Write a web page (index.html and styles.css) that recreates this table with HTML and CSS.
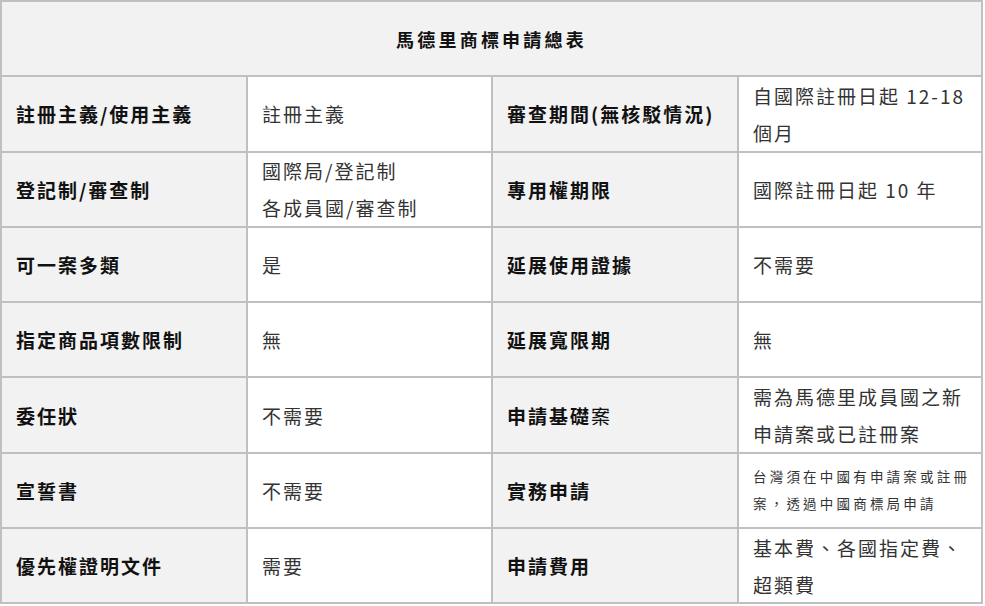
FILE: index.html
```html
<!DOCTYPE html>
<html lang="zh-Hant">
<head>
<meta charset="utf-8">
<title>馬德里商標申請總表</title>
<link rel="stylesheet" href="styles.css">
</head>
<body>
<div class="table">
  <div class="head">馬德里商標申請總表</div>

  <div class="cell label">註冊主義/使用主義</div>
  <div class="cell value">註冊主義</div>
  <div class="cell label">審查期間(無核駁情況)</div>
  <div class="cell value">自國際註冊日起 12-18 個月</div>

  <div class="cell label">登記制/審查制</div>
  <div class="cell value">國際局/登記制<br>各成員國/審查制</div>
  <div class="cell label">專用權期限</div>
  <div class="cell value">國際註冊日起 10 年</div>

  <div class="cell label">可一案多類</div>
  <div class="cell value">是</div>
  <div class="cell label">延展使用證據</div>
  <div class="cell value">不需要</div>

  <div class="cell label">指定商品項數限制</div>
  <div class="cell value">無</div>
  <div class="cell label">延展寬限期</div>
  <div class="cell value">無</div>

  <div class="cell label">委任狀</div>
  <div class="cell value">不需要</div>
  <div class="cell label">申請基礎<span class="light">案</span></div>
  <div class="cell value">需為馬德里成員國之新申請案或已註冊案</div>

  <div class="cell label">宣誓書</div>
  <div class="cell value">不需要</div>
  <div class="cell label">實務申請</div>
  <div class="cell value small">台灣須在中國有申請案或註冊案，透過中國商標局申請</div>

  <div class="cell label">優先權證明文件</div>
  <div class="cell value">需要</div>
  <div class="cell label">申請費用</div>
  <div class="cell value">基本費、各國指定費、超類費</div>
</div>
</body>
</html>
```

FILE: styles.css
```css
html, body {
  margin: 0;
  padding: 0;
  background: #ffffff;
}

body {
  font-family: "Noto Sans CJK TC", "Noto Sans", sans-serif;
  font-size: 19px;
  color: #222;
}

.table {
  width: 983px;
  display: grid;
  grid-template-columns: 244px 243px 244px 242px;
  grid-auto-rows: 73.3px;
  gap: 2px;
  padding: 2px;
  box-sizing: border-box;
  background: #c0c0c0;
}

.head {
  grid-column: 1 / -1;
  background: #f2f2f2;
  display: flex;
  align-items: center;
  justify-content: center;
  font-weight: 700;
  font-size: 18px;
  letter-spacing: 3.2px;
  color: #111;
}

.cell {
  display: flex;
  align-items: center;
  padding: 0 6px 0 14px;
  line-height: 37px;
  letter-spacing: 2px;
  overflow: visible;
}

.cell.label {
  background: #f2f2f2;
  font-weight: 700;
  color: #111;
}

.cell.value {
  background: #ffffff;
  color: #333;
}

.cell.value.small {
  font-size: 13.5px;
  line-height: 27px;
  letter-spacing: 3.2px;
}

.light {
  font-weight: 400;
}
```
